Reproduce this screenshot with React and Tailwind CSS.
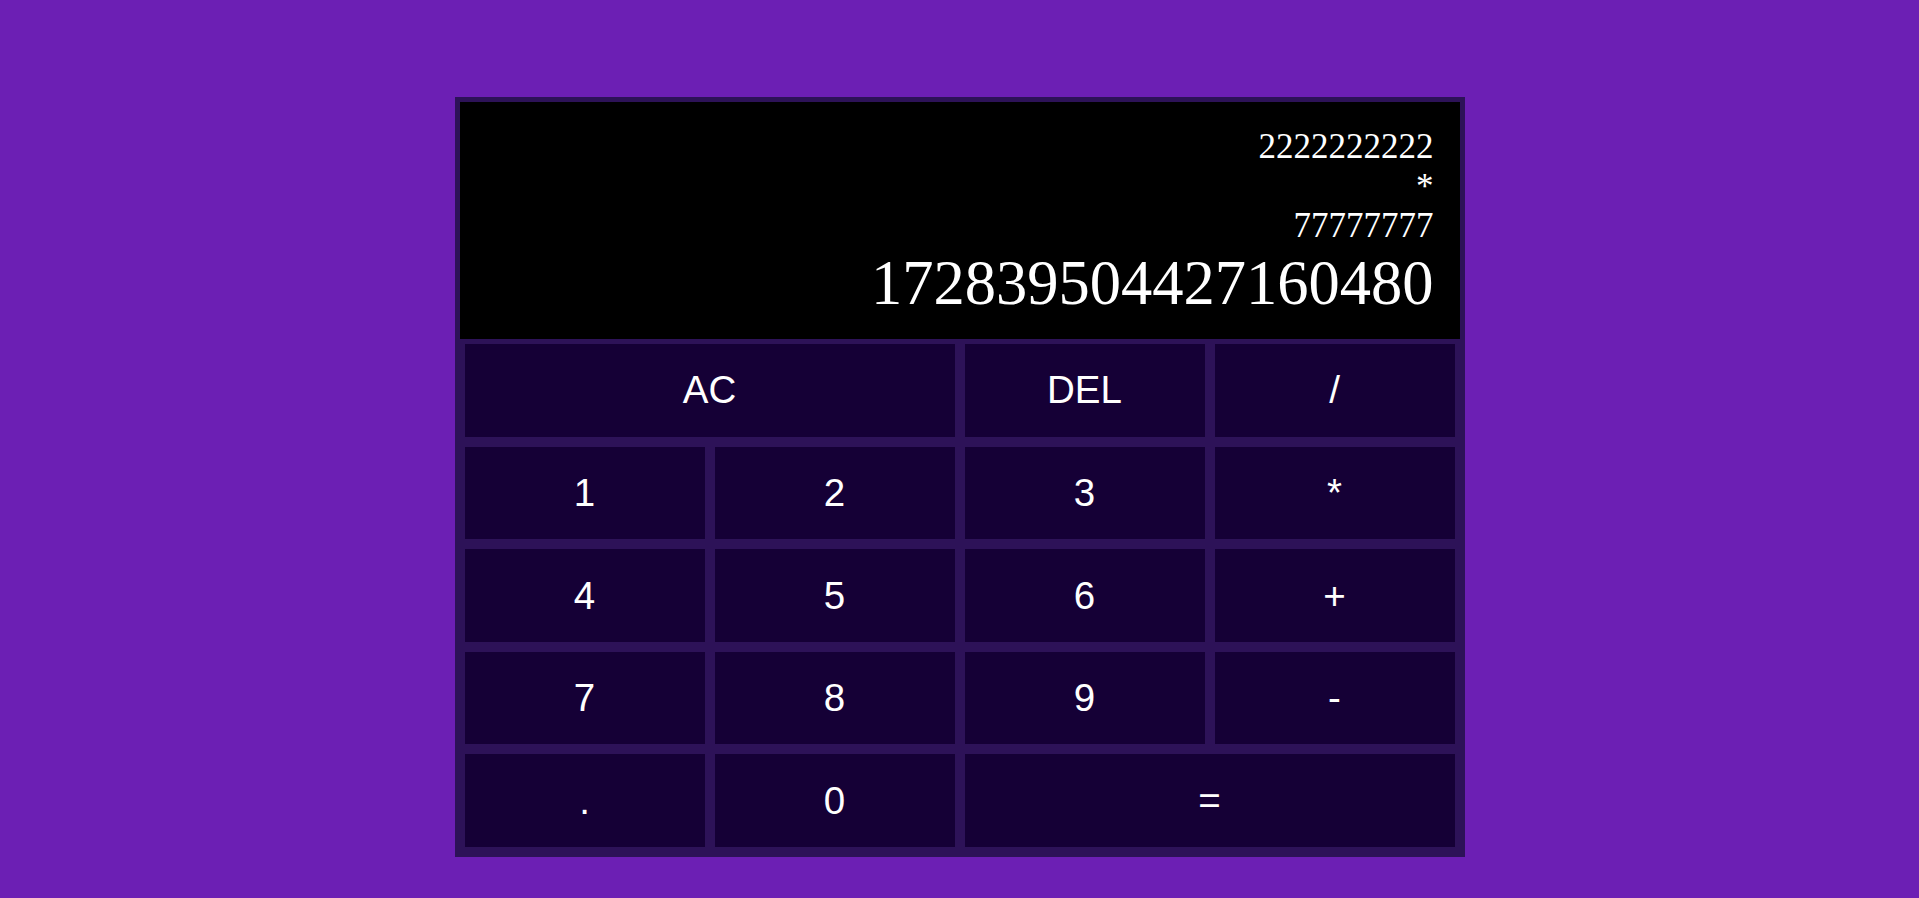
import React, { useState } from "react";

/* ---------------- Keypad layout ---------------- */
const KEYS = [
  { label: "AC", span: true },
  { label: "DEL" },
  { label: "/" },
  { label: "1" },
  { label: "2" },
  { label: "3" },
  { label: "*" },
  { label: "4" },
  { label: "5" },
  { label: "6" },
  { label: "+" },
  { label: "7" },
  { label: "8" },
  { label: "9" },
  { label: "-" },
  { label: "." },
  { label: "0" },
  { label: "=", span: true },
];

const serif = { fontFamily: '"Liberation Serif", "Times New Roman", serif' };
const sans = { fontFamily: '"Liberation Sans", Arial, sans-serif' };

/* ---------------- Component ---------------- */
export default function App() {
  const [prev] = useState(["2222222222", "*", "77777777"]);
  const [current] = useState("172839504427160480");

  return (
    <div className="min-h-screen w-full bg-[#6c1fb4] pt-[97px]">
      <div className="mx-auto w-[1010px] bg-[#2d1258] p-[5px]">
        {/* display */}
        <div
          className="flex h-[237px] flex-col items-end justify-end bg-black pr-[26px] pb-[25px] text-white"
          style={serif}
        >
          {prev.map((line, i) => (
            <div key={i} className="text-[35px] leading-[39.5px]">
              {line}
            </div>
          ))}
          <div className="mt-[6px] text-[62.5px] leading-[62.5px]">{current}</div>
        </div>

        {/* keypad */}
        <div className="grid h-[513px] grid-cols-4 grid-rows-5" style={sans}>
          {KEYS.map((k) => (
            <button
              key={k.label}
              className={`flex items-center justify-center border-[5px] border-[#2d1258] bg-[#150036] text-[38.5px] text-white ${
                k.span ? "col-span-2" : ""
              }`}
            >
              {k.label}
            </button>
          ))}
        </div>
      </div>
    </div>
  );
}
